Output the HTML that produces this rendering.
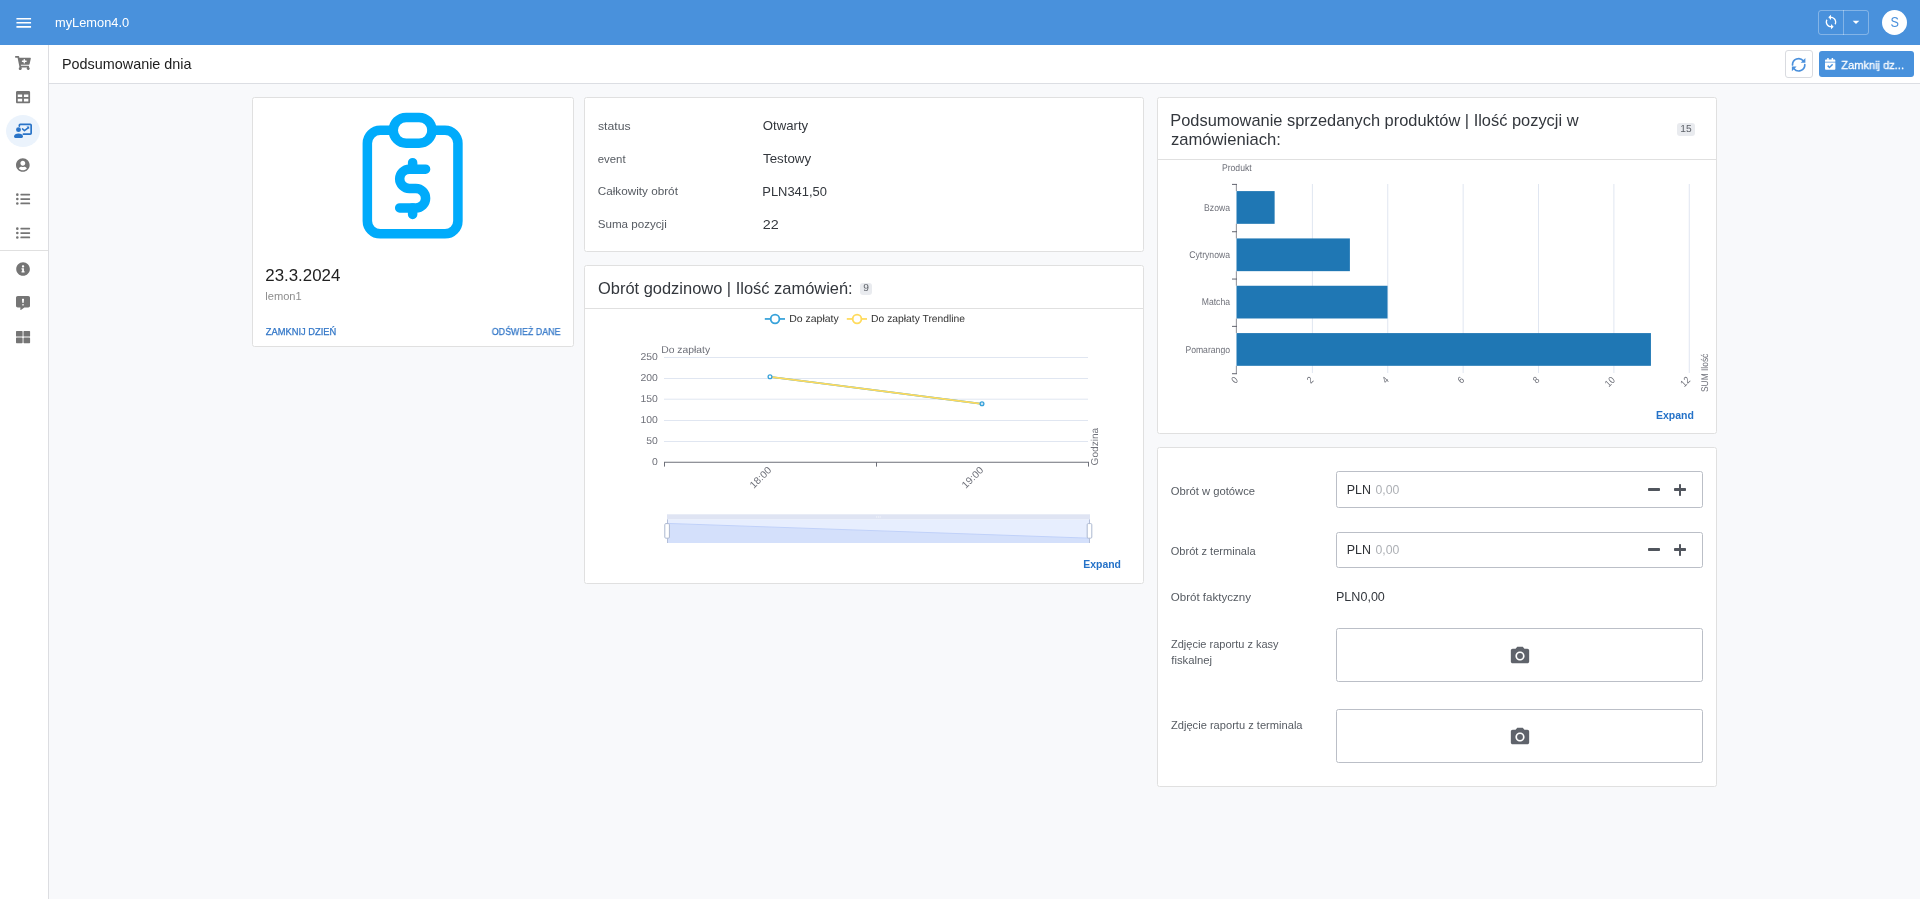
<!DOCTYPE html>
<html lang="pl"><head><meta charset="utf-8"><title>myLemon4.0 - Podsumowanie dnia</title>
<style>
*{box-sizing:border-box;margin:0;padding:0}
html,body{width:1920px;height:899px;overflow:hidden}
body{will-change:transform;background:#f8f9fb;font-family:"Liberation Sans",sans-serif;position:relative;color:#33373d}
.abs,.t,.ic{position:absolute}
.t{white-space:nowrap;line-height:1;display:block;transform-origin:0 0}
.ic{display:block;overflow:visible}
#topbar{left:0;top:0;width:1920px;height:45px;background:#4991dc}
#side{left:0;top:45px;width:49px;height:854px;background:#fff;border-right:1px solid #dcdde1}
#hdr{left:49px;top:45px;width:1871px;height:39px;background:#fff;border-bottom:1px solid #dcdee3}
.card{position:absolute;background:#fff;border:1px solid #e0e0e0;border-radius:2.5px}
.sep{position:absolute;left:0;right:0;height:1px;background:#e0e0e0}
.badge{position:absolute;background:#e9ebef;border-radius:3px;color:#5b5f66;font-size:10.2px;line-height:1;text-align:center;text-rendering:geometricPrecision}
.inp{position:absolute;background:#fff;border:1px solid #bbbfc7;border-radius:2.5px}
#chart{position:absolute;left:0;top:0;width:1920px;height:899px;pointer-events:none}
#chart text{font-family:"Liberation Sans",sans-serif}
</style></head>
<body>
<div id="topbar" class="abs"></div>
<div id="side" class="abs"></div>
<div id="hdr" class="abs"></div>
<div class="abs" style="left:0;top:250px;width:48px;height:1px;background:#e0e0e0"></div>
<div class="abs" style="left:6px;top:115px;width:34px;height:32px;border-radius:50%;background:#ebf3fc"></div>
<svg class="ic" style="left:13.8px;top:13px" width="19.5" height="19.5" viewBox="0 0 24 24"><path fill="#fff" d="M3 18h18v-2H3v2zm0-5h18v-2H3v2zm0-7v2h18V6H3z"/></svg>
<svg class="ic" style="left:15.00px;top:55.60px" width="15.86" height="14.10" viewBox="0 0 576 512"><path fill="#757575" d="M504.717 320H211.572l6.545 32h268.418c15.401 0 26.816 14.301 23.403 29.319l-5.517 24.276C523.112 414.668 536 433.828 536 456c0 31.202-25.519 56.444-56.824 55.994-29.823-.429-54.35-24.631-55.155-54.447-.44-16.287 6.085-31.049 16.803-41.548H231.176C241.553 426.165 248 440.326 248 456c0 31.813-26.528 57.431-58.67 55.938-28.54-1.325-51.751-24.385-53.251-52.917-1.158-22.034 10.436-41.455 28.051-51.586L93.883 64H24C10.745 64 0 53.255 0 40V24C0 10.745 10.745 0 24 0h102.529c11.401 0 21.228 8.021 23.513 19.19L159.208 64H551.99c15.401 0 26.816 14.301 23.403 29.319l-47.273 208C525.637 312.246 515.923 320 504.717 320zM408 168h-48v-40c0-8.837-7.163-16-16-16h-16c-8.837 0-16 7.163-16 16v40h-48c-8.837 0-16 7.163-16 16v16c0 8.837 7.163 16 16 16h48v40c0 8.837 7.163 16 16 16h16c8.837 0 16-7.163 16-16v-40h48c8.837 0 16-7.163 16-16v-16c0-8.837-7.163-16-16-16z"/></svg>
<svg class="ic" style="left:16.00px;top:89.60px" width="14.10" height="14.10" viewBox="0 0 512 512"><path fill="#757575" d="M464 32H48C21.49 32 0 53.49 0 80v352c0 26.51 21.49 48 48 48h416c26.51 0 48-21.49 48-48V80c0-26.51-21.49-48-48-48zM224 416H64v-96h160v96zm0-160H64v-96h160v96zm224 160H288v-96h160v96zm0-160H288v-96h160v96z"/></svg>
<svg class="ic" style="left:16.25px;top:157.70px" width="13.66" height="14.10" viewBox="0 0 496 512"><path fill="#757575" d="M248 8C111 8 0 119 0 256s111 248 248 248 248-111 248-248S385 8 248 8zm0 96c48.6 0 88 39.4 88 88s-39.4 88-88 88-88-39.4-88-88 39.4-88 88-88zm0 344c-58.7 0-111.3-26.6-146.5-68.2 18.8-35.4 55.6-59.8 98.5-59.8 2.4 0 4.8.4 7.1 1.1 13 4.2 26.6 6.9 40.9 6.9 14.3 0 28-2.7 40.9-6.9 2.3-.7 4.7-1.1 7.1-1.1 42.9 0 79.7 24.4 98.5 59.8C359.3 421.4 306.7 448 248 448z"/></svg>
<svg class="ic" style="left:16.00px;top:191.70px" width="14.10" height="14.10" viewBox="0 0 512 512"><path fill="#757575" d="M48 48a48 48 0 1 0 48 48 48 48 0 0 0-48-48zm0 160a48 48 0 1 0 48 48 48 48 0 0 0-48-48zm0 160a48 48 0 1 0 48 48 48 48 0 0 0-48-48zm448 16H176a16 16 0 0 0-16 16v32a16 16 0 0 0 16 16h320a16 16 0 0 0 16-16v-32a16 16 0 0 0-16-16zm0-320H176a16 16 0 0 0-16 16v32a16 16 0 0 0 16 16h320a16 16 0 0 0 16-16V80a16 16 0 0 0-16-16zm0 160H176a16 16 0 0 0-16 16v32a16 16 0 0 0 16 16h320a16 16 0 0 0 16-16v-32a16 16 0 0 0-16-16z"/></svg>
<svg class="ic" style="left:16.00px;top:225.70px" width="14.10" height="14.10" viewBox="0 0 512 512"><path fill="#757575" d="M48 48a48 48 0 1 0 48 48 48 48 0 0 0-48-48zm0 160a48 48 0 1 0 48 48 48 48 0 0 0-48-48zm0 160a48 48 0 1 0 48 48 48 48 0 0 0-48-48zm448 16H176a16 16 0 0 0-16 16v32a16 16 0 0 0 16 16h320a16 16 0 0 0 16-16v-32a16 16 0 0 0-16-16zm0-320H176a16 16 0 0 0-16 16v32a16 16 0 0 0 16 16h320a16 16 0 0 0 16-16V80a16 16 0 0 0-16-16zm0 160H176a16 16 0 0 0-16 16v32a16 16 0 0 0 16 16h320a16 16 0 0 0 16-16v-32a16 16 0 0 0-16-16z"/></svg>
<svg class="ic" style="left:16.00px;top:261.65px" width="14.10" height="14.10" viewBox="0 0 512 512"><path fill="#757575" d="M256 8C119.043 8 8 119.083 8 256c0 136.997 111.043 248 248 248s248-111.003 248-248C504 119.083 392.957 8 256 8zm0 110c23.196 0 42 18.804 42 42s-18.804 42-42 42-42-18.804-42-42 18.804-42 42-42zm56 254c0 6.627-5.373 12-12 12h-88c-6.627 0-12-5.373-12-12v-24c0-6.627 5.373-12 12-12h12v-64h-12c-6.627 0-12-5.373-12-12v-24c0-6.627 5.373-12 12-12h64c6.627 0 12 5.373 12 12v100h12c6.627 0 12 5.373 12 12v24z"/></svg>
<svg class="ic" style="left:16.10px;top:295.75px" width="14.00" height="14.00" viewBox="0 0 512 512"><path fill="#757575" d="M448 0H64C28.7 0 0 28.7 0 64v288c0 35.3 28.7 64 64 64h96v84c0 9.8 11.2 15.5 19.100 9.700L304 416h144c35.300 0 64-28.700 64-64V64c0-35.300-28.700-64-64-64zM256 352c-17.700 0-32-14.300-32-32s14.300-32 32-32 32 14.300 32 32-14.300 32-32 32zm25.400-110.400c-.800 8.200-7.700 14.400-15.900 14.400h-19c-8.200 0-15.100-6.200-15.900-14.400l-12.800-128c-.900-9.400 6.500-17.600 15.900-17.600h44.600c9.500 0 16.900 8.200 15.900 17.600l-12.800 128z"/></svg>
<svg class="ic" style="left:16.00px;top:329.60px" width="14.10" height="14.10" viewBox="0 0 512 512"><path fill="#757575" d="M296 32h192c13.255 0 24 10.745 24 24v160c0 13.255-10.745 24-24 24H296c-13.255 0-24-10.745-24-24V56c0-13.255 10.745-24 24-24zm-80 0H24C10.745 32 0 42.745 0 56v160c0 13.255 10.745 24 24 24h192c13.255 0 24-10.745 24-24V56c0-13.255-10.745-24-24-24zM0 296v160c0 13.255 10.745 24 24 24h192c13.255 0 24-10.745 24-24V296c0-13.255-10.745-24-24-24H24c-13.255 0-24 10.745-24 24zm296 184h192c13.255 0 24-10.745 24-24V296c0-13.255-10.745-24-24-24H296c-13.255 0-24 10.745-24 24v160c0 13.255 10.745 24 24 24z"/></svg>
<svg class="ic" style="left:0;top:108px" width="48" height="45" viewBox="0 108 48 45">
<path d="M23.4 134.15H30.2Q31.15 134.15 31.15 133.2V125.3Q31.15 124.35 30.2 124.35H20.3Q19.35 124.35 19.35 125.3V126.1" fill="none" stroke="#2a74c8" stroke-width="1.7" stroke-linecap="round"/>
<circle cx="18.5" cy="129.65" r="2.45" fill="#2a74c8"/>
<path d="M14 136.6C14 134.6 16.1 133.5 18.5 133.5S23 134.6 23 136.600C23 137.500 22.400 138 21.600 138H15.400C14.600 138 14 137.500 14 136.600Z" fill="#2a74c8"/>
<path d="M22.5 128.900L24.500 130.700L28.100 127.800" fill="none" stroke="#2a74c8" stroke-width="1.500" stroke-linecap="round" stroke-linejoin="round"/>
<path d="M26.500 126.600H29.200V129.300Z" fill="#2a74c8"/>
</svg>
<div class="abs" style="left:1818px;top:10px;width:51px;height:25px;border:1px solid rgba(255,255,255,.32);border-radius:3px"></div>
<div class="abs" style="left:1843px;top:10px;width:1px;height:25px;background:rgba(255,255,255,.32)"></div>
<svg class="ic" style="left:1822.9px;top:13.9px" width="16" height="16" viewBox="0 0 24 24"><path fill="#fff" d="M12 4V1L8 5l4 4V6c3.31 0 6 2.69 6 6 0 1.01-.25 1.97-.7 2.8l1.46 1.46C19.54 15.03 20 13.57 20 12c0-4.42-3.58-8-8-8zm0 14c-3.31 0-6-2.69-6-6 0-1.01.25-1.970.7-2.800L5.240 7.740C4.460 8.970 4 10.430 4 12c0 4.420 3.580 8 8 8v3l4-4-4-4v3z"/></svg>
<svg class="ic" style="left:1848.1px;top:13.8px" width="16" height="16" viewBox="0 0 24 24"><path fill="#fff" d="M7 10l5 5 5-5z"/></svg>
<div class="abs" style="left:1882px;top:10px;width:25px;height:25px;border-radius:50%;background:#fff;color:#4a90dc;font-size:14.4px;line-height:25px;text-align:center"><span style="display:inline-block;transform:scaleX(.88)">S</span></div>
<div class="abs" style="left:1785px;top:50px;width:28px;height:28px;border:1px solid #d9dbe0;border-radius:3px;background:#fff"></div>
<svg class="ic" style="left:1785px;top:50px" width="28" height="28" viewBox="1785 50 28 28">
<path d="M1792.5 64.9A6.150 6.150 0 0 1 1803.300 60.800" fill="none" stroke="#4a90dc" stroke-width="1.700" stroke-linecap="round"/>
<path d="M1804.800 64.700A6.150 6.150 0 0 1 1794.000 68.800" fill="none" stroke="#4a90dc" stroke-width="1.700" stroke-linecap="round"/>
<path d="M1805.400 58.100V62.750H1800.700Z" fill="#4a90dc"/>
<path d="M1791.900 71.200V66.550H1796.600Z" fill="#4a90dc"/>
</svg>
<div class="abs" style="left:1819px;top:51px;width:95px;height:26px;border-radius:3px;background:#4891dc"></div>
<svg class="ic" style="left:1824.90px;top:57.90px" width="10.37" height="11.85" viewBox="0 0 448 512"><path fill="#fff" d="M436 160H12c-6.627 0-12-5.373-12-12v-36c0-26.51 21.49-48 48-48h48V12c0-6.627 5.373-12 12-12h40c6.627 0 12 5.373 12 12v52h128V12c0-6.627 5.373-12 12-12h40c6.627 0 12 5.373 12 12v52h48c26.51 0 48 21.49 48 48v36c0 6.627-5.373 12-12 12zM12 192h424c6.627 0 12 5.373 12 12v260c0 26.51-21.49 48-48 48H48c-26.51 0-48-21.49-48-48V204c0-6.627 5.373-12 12-12zm333.296 95.947l-28.169-28.398c-4.667-4.705-12.265-4.736-16.97-.068L194.12 364.665l-45.98-46.352c-4.667-4.705-12.266-4.736-16.971-.068l-28.397 28.17c-4.705 4.667-4.736 12.265-.068 16.97l82.601 83.269c4.667 4.705 12.265 4.736 16.97.068l142.953-141.805c4.705-4.667 4.736-12.265.068-16.97z"/></svg>
<div class="card" style="left:252px;top:97px;width:322px;height:250px"></div>
<div class="card" style="left:584px;top:97px;width:560px;height:155px"></div>
<div class="card" style="left:584px;top:265px;width:560px;height:319px"><div class="sep" style="top:42px"></div></div>
<div class="card" style="left:1157px;top:97px;width:560px;height:337px"><div class="sep" style="top:61px"></div></div>
<div class="card" style="left:1157px;top:447px;width:560px;height:340px"></div>
<svg class="ic" style="left:334.9px;top:97.8px" width="155.28" height="155.28" viewBox="0 0 24 24" fill="none" stroke="#00abfb" stroke-width="1.47" stroke-linecap="round" stroke-linejoin="round">
<path d="M9 5h-2a2 2 0 0 0 -2 2v12a2 2 0 0 0 2 2h10a2 2 0 0 0 2 -2v-12a2 2 0 0 0 -2 -2h-2"/>
<path d="M9 5a2 2 0 0 1 2 -2h2a2 2 0 0 1 2 2a2 2 0 0 1 -2 2h-2a2 2 0 0 1 -2 -2z"/>
<path d="M14 11h-2.5a1.500 1.500 0 0 0 0 3h1a1.500 1.500 0 0 1 0 3h-2.500"/>
<path d="M12 17v1m0 -8v1"/>
</svg>
<div class="badge" style="left:860px;top:282.75px;width:12px;height:12px;padding-top:1.2px">9</div>
<div class="badge" style="left:1677px;top:123px;width:18px;height:12.8px;padding-top:1.5px">15</div>
<div class="inp" style="left:1336px;top:471px;width:367px;height:37px"></div>
<div class="inp" style="left:1336px;top:532px;width:367px;height:36px"></div>
<div class="inp" style="left:1336px;top:628px;width:367px;height:54px"></div>
<div class="inp" style="left:1336px;top:709px;width:367px;height:54px"></div>
<div class="abs" style="left:1647.7px;top:488.25px;width:12.1px;height:2.6px;border-radius:.8px;background:#50555d"></div>
<div class="abs" style="left:1673.8px;top:488.25px;width:12.1px;height:2.6px;border-radius:.8px;background:#50555d"></div>
<div class="abs" style="left:1678.55px;top:483.50px;width:2.6px;height:12.1px;border-radius:.8px;background:#50555d"></div>
<div class="abs" style="left:1647.7px;top:548.25px;width:12.1px;height:2.6px;border-radius:.8px;background:#50555d"></div>
<div class="abs" style="left:1673.8px;top:548.25px;width:12.1px;height:2.6px;border-radius:.8px;background:#50555d"></div>
<div class="abs" style="left:1678.55px;top:543.50px;width:2.6px;height:12.1px;border-radius:.8px;background:#50555d"></div>
<svg class="ic" style="left:1508.75px;top:645.0px" width="22" height="22" viewBox="0 0 24 24"><circle cx="12" cy="12" r="3.2" fill="#5f636b"/><path fill="#5f636b" d="M9 2 7.17 4H4c-1.1 0-2 .9-2 2v12c0 1.1.9 2 2 2h16c1.1 0 2-.9 2-2V6c0-1.1-.9-2-2-2h-3.170L15 2H9zm3 15c-2.760 0-5-2.240-5-5s2.240-5 5-5 5 2.240 5 5-2.240 5-5 5z"/></svg>
<svg class="ic" style="left:1508.75px;top:726.0px" width="22" height="22" viewBox="0 0 24 24"><circle cx="12" cy="12" r="3.2" fill="#5f636b"/><path fill="#5f636b" d="M9 2 7.17 4H4c-1.1 0-2 .9-2 2v12c0 1.1.9 2 2 2h16c1.1 0 2-.9 2-2V6c0-1.1-.9-2-2-2h-3.170L15 2H9zm3 15c-2.760 0-5-2.240-5-5s2.240-5 5-5 5 2.240 5 5-2.240 5-5 5z"/></svg>
<span class="t" id="t-brand" style="left:54px;top:16px;font-size:13.3px;color:#ffffff;transform:translateX(1.00px) scaleX(0.9649);">myLemon4.0</span>
<span class="t" id="t-title" style="left:62px;top:57px;font-size:14.2px;color:#1d1d1d;transform:translateX(0.00px) scaleX(1.0138);">Podsumowanie dnia</span>
<span class="t" id="t-btnz" style="left:1841px;top:60px;font-size:11.3px;color:#ffffff;-webkit-text-stroke:.28px #ffffff;transform:translateX(0.25px) scaleX(0.9799);">Zamknij dz...</span>
<span class="t" id="t-date" style="left:265px;top:267px;font-size:17.0px;color:#212121;transform:translateX(0.25px) scaleX(0.9933);">23.3.2024</span>
<span class="t" id="t-lemon" style="left:265px;top:291px;font-size:11.3px;color:#8e8e8e;transform:translateX(0.25px) scaleX(0.9846);">lemon1</span>
<span class="t" id="t-zd" style="left:265px;top:328px;font-size:10.1px;color:#3478c8;text-rendering:geometricPrecision;-webkit-text-stroke:.28px #3478c8;transform:translateX(0.75px) scaleX(0.9243);">ZAMKNIJ DZIEŃ</span>
<span class="t" id="t-od" style="left:491px;top:328px;font-size:10.1px;color:#3478c8;text-rendering:geometricPrecision;-webkit-text-stroke:.28px #3478c8;transform:translateX(0.75px) scaleX(0.8818);">ODŚWIEŻ DANE</span>
<span class="t" id="t-l1" style="left:597px;top:121px;font-size:11.3px;color:#565b62;transform:translateX(1.00px) scaleX(1.0838);">status</span>
<span class="t" id="t-l2" style="left:597px;top:154px;font-size:11.3px;color:#565b62;transform:translateX(0.75px) scaleX(1.0074);">event</span>
<span class="t" id="t-l3" style="left:597px;top:186px;font-size:11.3px;color:#565b62;transform:translateX(0.75px) scaleX(1.0378);">Całkowity obrót</span>
<span class="t" id="t-l4" style="left:597px;top:219px;font-size:11.3px;color:#565b62;transform:translateX(0.75px) scaleX(1.0274);">Suma pozycji</span>
<span class="t" id="t-v1" style="left:762px;top:119px;font-size:13.2px;color:#33373d;transform:translateX(0.75px) scaleX(0.9989);">Otwarty</span>
<span class="t" id="t-v2" style="left:762px;top:152px;font-size:13.2px;color:#33373d;transform:translateX(1.00px) scaleX(1.0085);">Testowy</span>
<span class="t" id="t-v3" style="left:762px;top:185px;font-size:13.2px;color:#33373d;transform:translateX(0.25px) scaleX(0.9806);">PLN341,50</span>
<span class="t" id="t-v4" style="left:762px;top:218px;font-size:13.2px;color:#33373d;transform:translateX(0.75px) scaleX(1.0853);">22</span>
<span class="t" id="t-c3t" style="left:598px;top:280px;font-size:16.2px;color:#33373d;transform:translateX(0.00px) scaleX(1.0157);">Obrót godzinowo | Ilość zamówień:</span>
<span class="t" id="t-c4t1" style="left:1170px;top:112px;font-size:16.2px;color:#33373d;transform:translateX(0.25px) scaleX(1.0136);">Podsumowanie sprzedanych produktów | Ilość pozycji w</span>
<span class="t" id="t-c4t2" style="left:1170px;top:131px;font-size:16.2px;color:#33373d;transform:translateX(1.00px) scaleX(1.0257);">zamówieniach:</span>
<span class="t" id="t-ex1" style="left:1083px;top:559px;font-size:11.3px;color:#2572c8;font-weight:700;transform:translateX(0.25px) scaleX(0.9236);">Expand</span>
<span class="t" id="t-ex2" style="left:1656px;top:410px;font-size:11.3px;color:#2572c8;font-weight:700;transform:translateX(0.00px) scaleX(0.9300);">Expand</span>
<span class="t" id="t-f1" style="left:1170px;top:486px;font-size:11.3px;color:#565b62;transform:translateX(0.75px) scaleX(0.9952);">Obrót w gotówce</span>
<span class="t" id="t-f2" style="left:1170px;top:546px;font-size:11.3px;color:#565b62;transform:translateX(0.75px) scaleX(0.9791);">Obrót z terminala</span>
<span class="t" id="t-f3" style="left:1170px;top:592px;font-size:11.3px;color:#565b62;transform:translateX(0.75px) scaleX(1.0231);">Obrót faktyczny</span>
<span class="t" id="t-f4a" style="left:1170px;top:639px;font-size:11.3px;color:#565b62;transform:translateX(1.00px) scaleX(0.9732);">Zdjęcie raportu z kasy</span>
<span class="t" id="t-f4b" style="left:1171px;top:655px;font-size:11.3px;color:#565b62;transform:translateX(0.25px) scaleX(1.0000);">fiskalnej</span>
<span class="t" id="t-f5" style="left:1170px;top:720px;font-size:11.3px;color:#565b62;transform:translateX(1.00px) scaleX(0.9835);">Zdjęcie raportu z terminala</span>
<span class="t" id="t-pln1" style="left:1346px;top:483px;font-size:13.2px;color:#2f3237;transform:translateX(0.75px) scaleX(0.9447);">PLN</span>
<span class="t" id="t-ph1" style="left:1375px;top:483px;font-size:13.2px;color:#adb0b5;transform:translateX(0.50px) scaleX(0.9293);">0,00</span>
<span class="t" id="t-pln2" style="left:1346px;top:543px;font-size:13.2px;color:#2f3237;transform:translateX(0.75px) scaleX(0.9447);">PLN</span>
<span class="t" id="t-ph2" style="left:1375px;top:543px;font-size:13.2px;color:#adb0b5;transform:translateX(0.50px) scaleX(0.9293);">0,00</span>
<span class="t" id="t-pv" style="left:1336px;top:590px;font-size:13.2px;color:#33373d;transform:translateX(0.00px) scaleX(0.9518);">PLN0,00</span>
<svg id="chart" width="1920" height="899" viewBox="0 0 1920 899" text-rendering="geometricPrecision">
<line x1="664" x2="1088" y1="357.5" y2="357.5" stroke="#E0E6F1" stroke-width="1"/>
<line x1="664" x2="1088" y1="378.5" y2="378.5" stroke="#E0E6F1" stroke-width="1"/>
<line x1="664" x2="1088" y1="399.2" y2="399.2" stroke="#E0E6F1" stroke-width="1"/>
<line x1="664" x2="1088" y1="420.5" y2="420.5" stroke="#E0E6F1" stroke-width="1"/>
<line x1="664" x2="1088" y1="441.5" y2="441.5" stroke="#E0E6F1" stroke-width="1"/>
<text transform="translate(657.8,360.00) scale(1.04,1)" font-size="10.0" fill="#6E7079" text-anchor="end">250</text>
<text transform="translate(657.8,380.95) scale(1.04,1)" font-size="10.0" fill="#6E7079" text-anchor="end">200</text>
<text transform="translate(657.8,401.80) scale(1.04,1)" font-size="10.0" fill="#6E7079" text-anchor="end">150</text>
<text transform="translate(657.8,422.95) scale(1.04,1)" font-size="10.0" fill="#6E7079" text-anchor="end">100</text>
<text transform="translate(657.8,443.95) scale(1.04,1)" font-size="10.0" fill="#6E7079" text-anchor="end">50</text>
<text transform="translate(657.8,464.90) scale(1.04,1)" font-size="10.0" fill="#6E7079" text-anchor="end">0</text>
<text x="661.2" y="352.85" font-size="10.0" fill="#6E7079" textLength="48.9" lengthAdjust="spacingAndGlyphs">Do zapłaty</text>
<line x1="664" x2="1089" y1="462.25" y2="462.25" stroke="#6E7079" stroke-width="1"/>
<line x1="664.5" x2="664.5" y1="462" y2="466.6" stroke="#6E7079" stroke-width="1"/>
<line x1="876.5" x2="876.5" y1="462" y2="466.6" stroke="#6E7079" stroke-width="1"/>
<line x1="1088.5" x2="1088.5" y1="462" y2="466.6" stroke="#6E7079" stroke-width="1"/>
<text transform="translate(772.0,470.8) rotate(-45) scale(1.03,1)" font-size="10.0" fill="#6E7079" text-anchor="end">18:00</text>
<text transform="translate(984.0,470.8) rotate(-45) scale(1.03,1)" font-size="10.0" fill="#6E7079" text-anchor="end">19:00</text>
<text transform="translate(1098.4,465.4) rotate(-90)" font-size="10.0" fill="#6E7079" textLength="37.6" lengthAdjust="spacingAndGlyphs">Godzina</text>
<line x1="764.8" x2="785" y1="318.95" y2="318.95" stroke="#37A2DA" stroke-width="1.75"/><circle cx="775.05" cy="318.95" r="4.35" fill="#fff" stroke="#37A2DA" stroke-width="1.8"/>
<text x="789.2" y="321.9" font-size="10.3" fill="#333" textLength="49.6" lengthAdjust="spacingAndGlyphs">Do zapłaty</text>
<line x1="846.8" x2="867" y1="318.95" y2="318.95" stroke="#FFDB5C" stroke-width="1.75"/><circle cx="857.05" cy="318.95" r="4.35" fill="#fff" stroke="#FFDB5C" stroke-width="1.8"/>
<text x="871.1" y="321.9" font-size="10.3" fill="#333" textLength="94.0" lengthAdjust="spacingAndGlyphs">Do zapłaty Trendline</text>
<line x1="770" y1="376.8" x2="982" y2="403.8" stroke="#37A2DA" stroke-width="1.7"/>
<line x1="770" y1="376.8" x2="982" y2="403.8" stroke="#FFDB5C" stroke-width="1.7"/>
<circle cx="770" cy="376.8" r="1.9" fill="#fff" stroke="#37A2DA" stroke-width="1.3"/>
<circle cx="982" cy="403.8" r="1.9" fill="#cfe6f5" stroke="#37A2DA" stroke-width="1.3"/>
<rect x="667" y="514.3" width="423" height="5.3" fill="#dfe4f3"/>
<rect x="667" y="519.6" width="423" height="23.3" fill="#e7eefe"/>
<path d="M667 523.4L1090 538.2V542.9H667Z" fill="#d4e0fb"/>
<path d="M667 523.4L1090 538.2" fill="none" stroke="#c0d1f9" stroke-width="1"/>
<line x1="667.5" x2="667.5" y1="519.4" y2="543" stroke="#b4bfd8" stroke-width="1"/>
<line x1="1089.5" x2="1089.5" y1="519.4" y2="543" stroke="#b4bfd8" stroke-width="1"/>
<rect x="664.8" y="523.6" width="4.6" height="14.6" rx="1.1" fill="#fff" stroke="#acb8d1" stroke-width="1"/>
<rect x="1087.2" y="523.6" width="4.6" height="14.6" rx="1.1" fill="#fff" stroke="#acb8d1" stroke-width="1"/>
<path d="M876.6 516.4v1.2M878.4 516.4v1.2M880.2 516.4v1.2" stroke="#fff" stroke-width=".7" opacity=".9"/>
<line x1="1312.38" x2="1312.38" y1="184" y2="373" stroke="#E0E6F1" stroke-width="1"/>
<line x1="1387.76" x2="1387.76" y1="184" y2="373" stroke="#E0E6F1" stroke-width="1"/>
<line x1="1463.14" x2="1463.14" y1="184" y2="373" stroke="#E0E6F1" stroke-width="1"/>
<line x1="1538.52" x2="1538.52" y1="184" y2="373" stroke="#E0E6F1" stroke-width="1"/>
<line x1="1613.90" x2="1613.90" y1="184" y2="373" stroke="#E0E6F1" stroke-width="1"/>
<line x1="1689.28" x2="1689.28" y1="184" y2="373" stroke="#E0E6F1" stroke-width="1"/>
<line x1="1236.4" x2="1236.4" y1="184.00" y2="191.10" stroke="#6E7079" stroke-width="1.1" opacity=".7"/>
<line x1="1236.4" x2="1236.4" y1="223.83" y2="238.43" stroke="#6E7079" stroke-width="1.1" opacity=".7"/>
<line x1="1236.4" x2="1236.4" y1="271.16" y2="285.76" stroke="#6E7079" stroke-width="1.1" opacity=".7"/>
<line x1="1236.4" x2="1236.4" y1="318.49" y2="333.09" stroke="#6E7079" stroke-width="1.1" opacity=".7"/>
<line x1="1236.4" x2="1236.4" y1="365.82" y2="373.80" stroke="#6E7079" stroke-width="1.1" opacity=".7"/>
<rect x="1236.5" y="191.10" width="38.13" height="32.73" fill="#1f77b4"/>
<text transform="translate(1230.0,210.51) scale(0.885,1)" font-size="9.75" fill="#6E7079" text-anchor="end">Bzowa</text>
<rect x="1236.5" y="238.43" width="113.39" height="32.73" fill="#1f77b4"/>
<text transform="translate(1230.0,257.85) scale(0.885,1)" font-size="9.75" fill="#6E7079" text-anchor="end">Cytrynowa</text>
<rect x="1236.5" y="285.76" width="151.02" height="32.73" fill="#1f77b4"/>
<text transform="translate(1230.0,305.18) scale(0.885,1)" font-size="9.75" fill="#6E7079" text-anchor="end">Matcha</text>
<rect x="1236.5" y="333.09" width="414.43" height="32.73" fill="#1f77b4"/>
<text transform="translate(1230.0,352.50) scale(0.885,1)" font-size="9.75" fill="#6E7079" text-anchor="end">Pomarango</text>
<line x1="1232" x2="1237" y1="184.40" y2="184.40" stroke="#62646f" stroke-width="1"/>
<line x1="1232" x2="1237" y1="231.73" y2="231.73" stroke="#62646f" stroke-width="1"/>
<line x1="1232" x2="1237" y1="279.06" y2="279.06" stroke="#62646f" stroke-width="1"/>
<line x1="1232" x2="1237" y1="326.39" y2="326.39" stroke="#62646f" stroke-width="1"/>
<line x1="1232" x2="1237" y1="373.72" y2="373.72" stroke="#62646f" stroke-width="1"/>
<text transform="translate(1236.8,170.7) scale(0.885,1)" font-size="9.75" fill="#6E7079" text-anchor="middle">Produkt</text>
<text transform="translate(1238.70,380.6) rotate(-45) scale(0.885,1)" font-size="9.75" fill="#6E7079" text-anchor="end">0</text>
<text transform="translate(1314.08,380.6) rotate(-45) scale(0.885,1)" font-size="9.75" fill="#6E7079" text-anchor="end">2</text>
<text transform="translate(1389.46,380.6) rotate(-45) scale(0.885,1)" font-size="9.75" fill="#6E7079" text-anchor="end">4</text>
<text transform="translate(1464.84,380.6) rotate(-45) scale(0.885,1)" font-size="9.75" fill="#6E7079" text-anchor="end">6</text>
<text transform="translate(1540.22,380.6) rotate(-45) scale(0.885,1)" font-size="9.75" fill="#6E7079" text-anchor="end">8</text>
<text transform="translate(1615.60,380.6) rotate(-45) scale(0.885,1)" font-size="9.75" fill="#6E7079" text-anchor="end">10</text>
<text transform="translate(1690.98,380.6) rotate(-45) scale(0.885,1)" font-size="9.75" fill="#6E7079" text-anchor="end">12</text>
<text transform="translate(1707.5,392.0) rotate(-90)" font-size="9.75" fill="#6E7079" textLength="38.3" lengthAdjust="spacingAndGlyphs">SUM Ilość</text>
</svg>
</body></html>
